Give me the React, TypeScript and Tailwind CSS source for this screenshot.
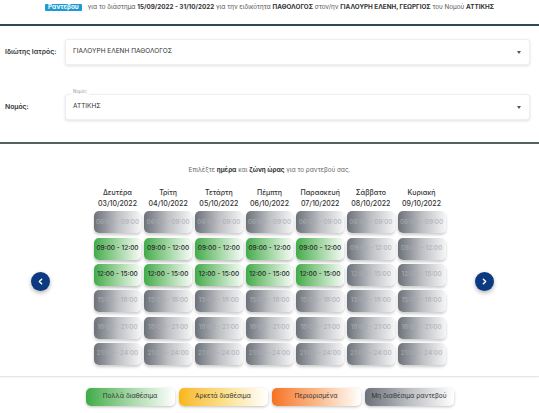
import { ChevronLeft, ChevronRight } from "lucide-react";

const days = [
  { name: "Δευτέρα", date: "03/10/2022" },
  { name: "Τρίτη", date: "04/10/2022" },
  { name: "Τετάρτη", date: "05/10/2022" },
  { name: "Πέμπτη", date: "06/10/2022" },
  { name: "Παρασκευή", date: "07/10/2022" },
  { name: "Σάββατο", date: "08/10/2022" },
  { name: "Κυριακή", date: "09/10/2022" },
];

const times = [
  "06:00 - 09:00",
  "09:00 - 12:00",
  "12:00 - 15:00",
  "15:00 - 18:00",
  "18:00 - 21:00",
  "21:00 - 24:00",
];

// weekdays have the 09-12 and 12-15 zones open
const isOpen = (day: number, slot: number) => day < 5 && (slot === 1 || slot === 2);

function Select({ value, legend }: { value: string; legend?: string }) {
  return (
    <div className="relative flex-1 h-[26px] flex items-center justify-between pl-[7px] pr-[8px] bg-white rounded-[3px] border border-[#efefef] shadow-[0_1px_3px_rgba(0,0,0,0.12)]">
      {legend && (
        <span className="absolute left-[5px] -top-[5px] px-[2px] bg-white text-[4.5px] text-[#9a9a9a] leading-none">
          {legend}
        </span>
      )}
      <span className="text-[6.5px] text-[#333]">{value}</span>
      <span className="w-0 h-0 border-l-[2.5px] border-r-[2.5px] border-t-[3px] border-l-transparent border-r-transparent border-t-[#555]" />
    </div>
  );
}

function NavButton({ dir }: { dir: "left" | "right" }) {
  return (
    <button className="w-[19px] h-[19px] rounded-full bg-[#0c3a80] flex items-center justify-center text-white shadow-[0_2px_4px_rgba(0,0,0,0.3)]">
      {dir === "left" ? (
        <ChevronLeft className="w-[9px] h-[9px]" strokeWidth={4} />
      ) : (
        <ChevronRight className="w-[9px] h-[9px]" strokeWidth={4} />
      )}
    </button>
  );
}

export default function App() {
  return (
    <div className="w-[539px] h-[413px] bg-white overflow-hidden font-['Inter',sans-serif] text-[#333]">
      {/* Banner */}
      <div className="h-[24px] flex justify-center items-start pt-[4px] gap-[4px] text-[6.3px] leading-[7px] text-[#555]">
        <span className="bg-[#1c9bd1] text-white font-bold px-[3px] rounded-[1px]">Ραντεβού</span>
        <span className="ml-[2px]">
          για το διάστημα <b className="text-[#333]">15/09/2022 - 31/10/2022</b> για την ειδικότητα{" "}
          <b className="text-[#333]">ΠΑΘΟΛΟΓΟΣ</b> στον/ην <b className="text-[#333]">ΓΙΑΛΟΥΡΗ ΕΛΕΝΗ, ΓΕΩΡΓΙΟΣ</b> του
          Νομού <b className="text-[#333]">ΑΤΤΙΚΗΣ</b>
        </span>
      </div>
      <div className="h-[2px] bg-[#2e4858]" />

      {/* Form */}
      <div className="h-[116px] pl-[5px] pr-[9px] pt-[13px] flex flex-col gap-[29px]">
        <div className="flex items-center">
          <span className="w-[60px] text-[6.8px] font-semibold text-[#333]">Ιδιώτης Ιατρός:</span>
          <Select value="ΓΙΑΛΟΥΡΗ ΕΛΕΝΗ ΠΑΘΟΛΟΓΟΣ" />
        </div>
        <div className="flex items-center">
          <span className="w-[60px] text-[6.8px] font-semibold text-[#333]">Νομός:</span>
          <Select value="ΑΤΤΙΚΗΣ" legend="Νομός" />
        </div>
      </div>
      <div className="h-[2px] bg-[#56625f]" />

      {/* Schedule */}
      <div className="h-[232px] pt-[22px]">
        <p className="text-center text-[6.3px] text-[#666]">
          Επιλέξτε <b className="text-[#333]">ημέρα</b> και <b className="text-[#333]">ζώνη ώρας</b> για το ραντεβού σας.
        </p>
        <div className="mt-[12px] grid grid-cols-[1fr_352px_1fr] items-center">
          <div className="pl-[31px] pt-[10px]">
            <NavButton dir="left" />
          </div>
          <div className="grid grid-cols-7 gap-x-[2.7px]">
            {days.map((d, di) => (
              <div key={d.name} className="flex flex-col">
                <div className="text-center text-[7px] leading-[11px] font-medium text-[#333] mb-[2px]">
                  <div>{d.name}</div>
                  <div>{d.date}</div>
                </div>
                <div className="flex flex-col gap-[4.3px]">
                  {times.map((t, si) =>
                    isOpen(di, si) ? (
                      <div
                        key={t}
                        className="h-[22px] rounded-[5px] flex items-center justify-center text-[6.5px] font-medium text-[#2a2a2a] bg-linear-to-r from-[#3fab49] via-[#9fd5a1] to-[#f7fbf7] shadow-[0_2px_3px_rgba(0,0,0,0.25)]"
                      >
                        {t}
                      </div>
                    ) : (
                      <div
                        key={t}
                        className="h-[22px] rounded-[5px] flex items-center justify-center text-[6.5px] text-[#a9acb1] bg-linear-to-r from-[#6d727a] via-[#bdbfc3] to-[#f6f6f7] shadow-[0_2px_3px_rgba(0,0,0,0.2)]"
                      >
                        {t}
                      </div>
                    )
                  )}
                </div>
              </div>
            ))}
          </div>
          <div className="pl-[29px] pt-[10px]">
            <NavButton dir="right" />
          </div>
        </div>
      </div>
      <div className="h-px bg-[#e6e6e6] shadow-[0_1px_2px_rgba(0,0,0,0.05)]" />

      {/* Legend */}
      <div className="pt-[11px] flex justify-center gap-[4px] text-[6.5px] text-[#333]">
        <div className="w-[89px] h-[18px] rounded-[5px] flex items-center justify-center bg-linear-to-r from-[#3dab47] via-[#a5d8a7] to-white shadow-[0_1px_3px_rgba(0,0,0,0.25)]">
          Πολλά διαθέσιμα
        </div>
        <div className="w-[89px] h-[18px] rounded-[5px] flex items-center justify-center bg-linear-to-r from-[#f8b704] via-[#fbe08a] to-white shadow-[0_1px_3px_rgba(0,0,0,0.25)]">
          Αρκετά διαθέσιμα
        </div>
        <div className="w-[89px] h-[18px] rounded-[5px] flex items-center justify-center bg-linear-to-r from-[#f6721a] via-[#f9b888] to-white shadow-[0_1px_3px_rgba(0,0,0,0.25)]">
          Περιορισμένα
        </div>
        <div className="w-[89px] h-[18px] rounded-[5px] flex items-center justify-center bg-linear-to-r from-[#6d727a] via-[#bdbfc3] to-white shadow-[0_1px_3px_rgba(0,0,0,0.25)]">
          Μη διαθέσιμα ραντεβού
        </div>
      </div>
    </div>
  );
}
